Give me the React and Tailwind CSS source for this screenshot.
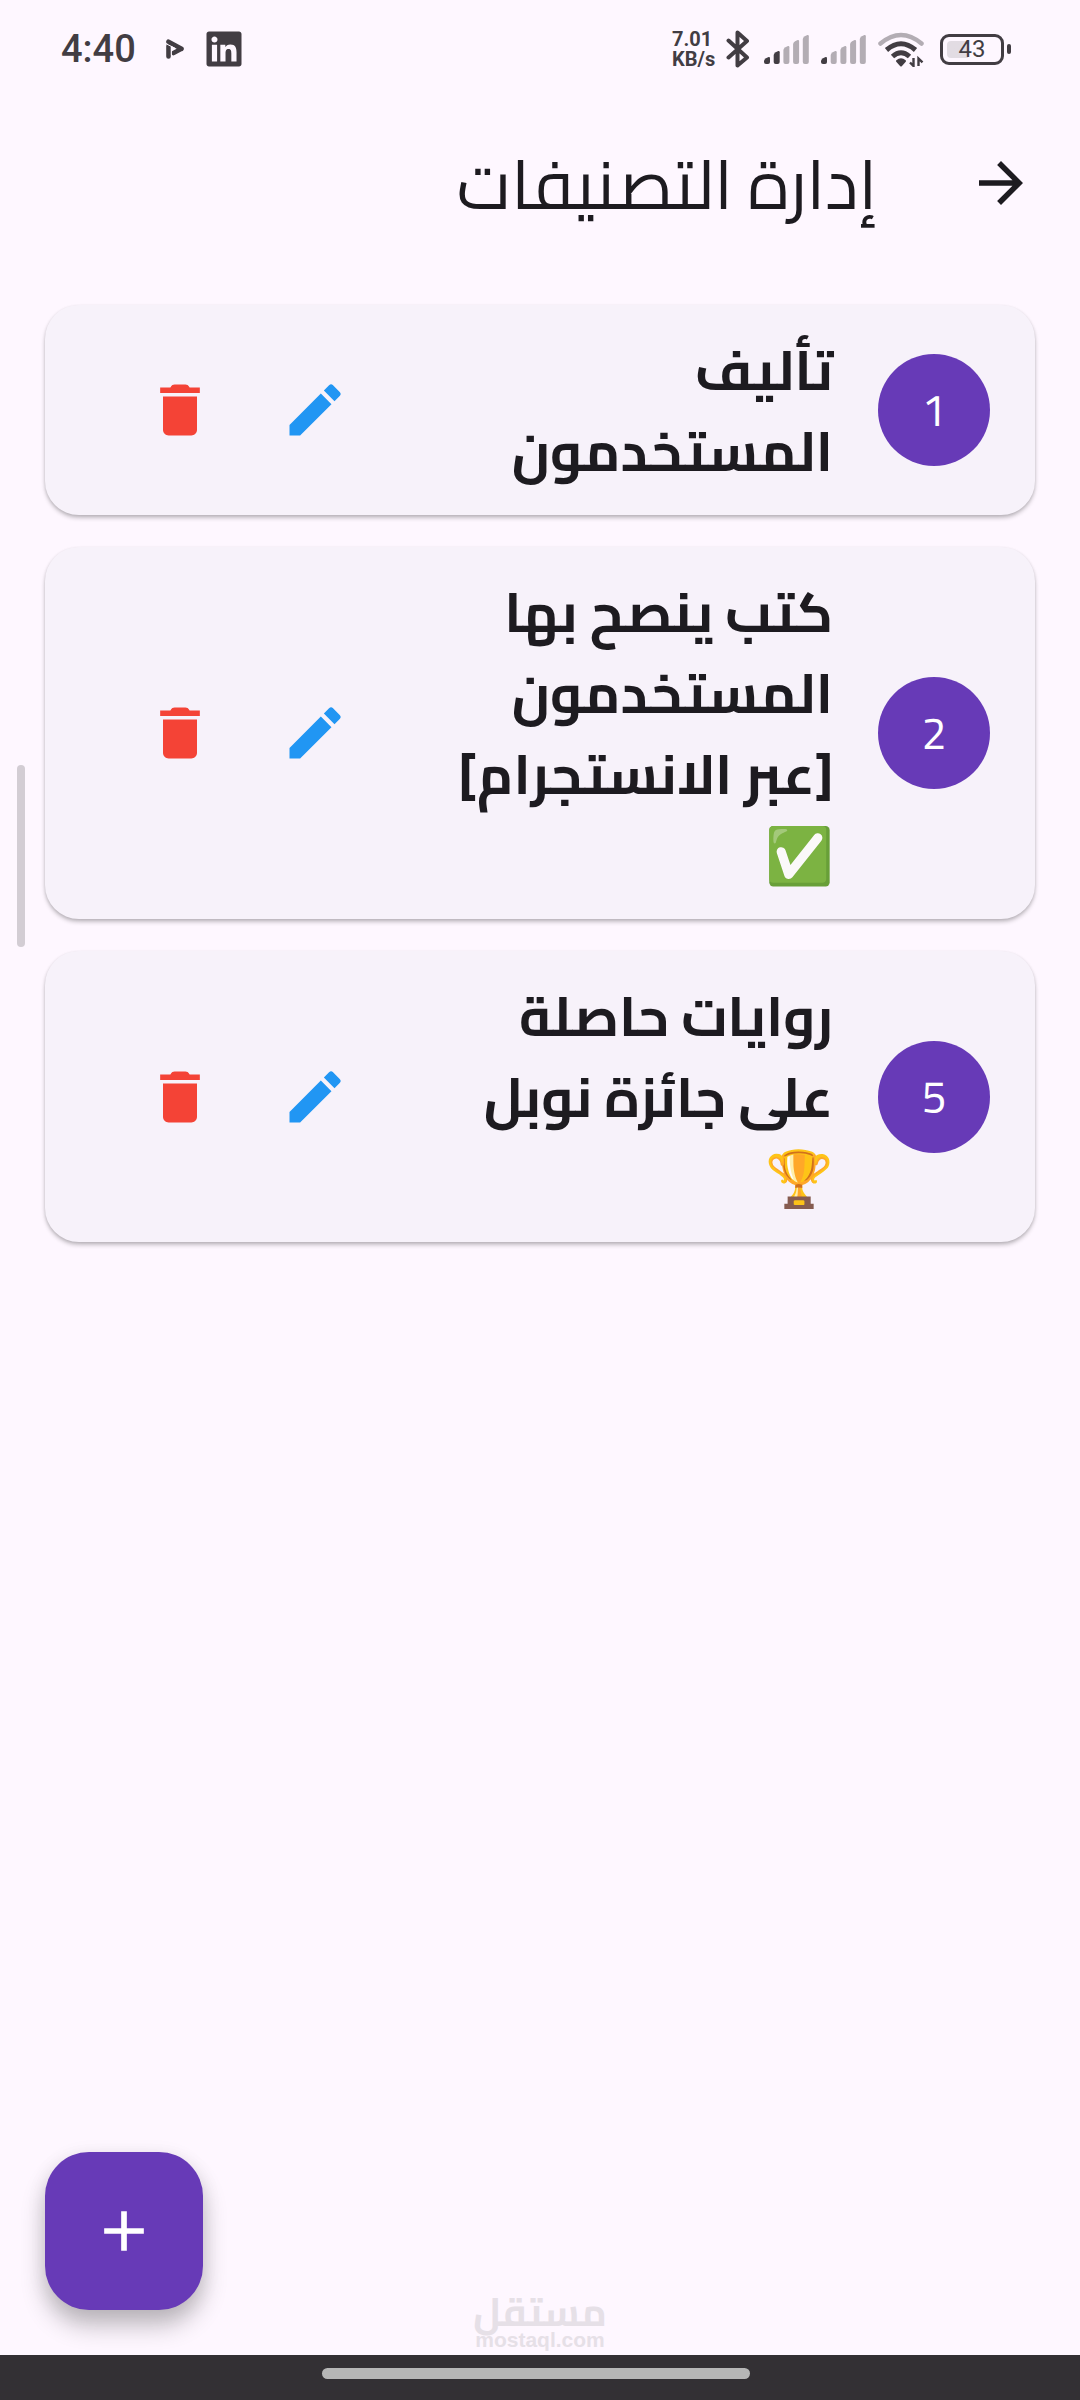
import React, { useState } from "react";
import { FaLinkedin } from "react-icons/fa";
import { MdAdd, MdArrowForward, MdEdit } from "react-icons/md";

const initialCategories = [
  { id: 1, lines: ["تأليف", "المستخدمون"] },
  { id: 2, lines: ["كتب ينصح بها", "المستخدمون", "[عبر الانستجرام]", "✅"] },
  { id: 5, lines: ["روايات حاصلة", "على جائزة نوبل", "🏆"] },
];

const TrashIcon = () => (
  <svg viewBox="0 0 24 24" className="size-[68px]" fill="currentColor" aria-hidden="true">
    <path d="M19 4.1h-3.6c-.5-.9-.9-1.1-1.500-1.100h-3.800c-.6 0-1 .2-1.500 1.100H5V6h14zM6 7.200V19c0 1.100.9 2 2 2h8c1.100 0 2-.9 2-2V7.200z" />
  </svg>
);

const PlayIcon = () => (
  <svg viewBox="0 0 18 20" className="h-5 w-[18px]" fill="none" aria-hidden="true">
    <path
      d="M2.500 2.700 15.500 9.800M2.500 7v10.500M7.500 14 15.500 9.800"
      stroke="currentColor"
      strokeWidth="4.600"
      strokeLinecap="round"
    />
    <path d="M1 5.200 9 9.300M5.400 8v8" stroke="#fef7ff" strokeWidth="1" />
  </svg>
);

const BluetoothIcon = () => (
  <svg viewBox="0 0 24 38" className="h-[38px] w-6" fill="none" aria-hidden="true">
    <path
      d="M2.500 10.500 21 27.500 11.500 35.500V2.500L21 11 2.500 27.500"
      stroke="currentColor"
      strokeWidth="4"
      strokeLinecap="round"
      strokeLinejoin="round"
    />
  </svg>
);

const SignalIcon = ({ level }) => (
  <svg viewBox="0 0 45 29" className="h-[29px] w-[45px]" aria-hidden="true">
    {[7, 13, 18, 24, 29].map((height, i) => {
      const x = i * 9.7;
      const top = 29 - height;
      return (
        <path
          key={height}
          d={`M${x} ${top + 4}q.2-1.800 2-2.700l2.600-1.200q1.400-.3 1.400 1.200V27q0 2-2 2h-2q-2 0-2-2z`}
          fill={i < level ? "#423d43" : "#b3adb4"}
        />
      );
    })}
  </svg>
);

const WifiIcon = () => (
  <svg viewBox="0 0 46 35" className="h-[35px] w-[46px]" fill="none" aria-hidden="true">
    <path d="M2.500 11.500Q23-5.500 43.500 11.500" stroke="#b3adb4" strokeWidth="4.500" strokeLinecap="round" />
    <path d="M8.500 18Q23 5.500 37.500 18M14.500 24.500Q23 17 31.500 24.500" stroke="currentColor" strokeWidth="5" />
    <path d="M19 29q4-3.500 8 0l-4 4.500z" fill="currentColor" stroke="currentColor" strokeWidth="2" strokeLinejoin="round" />
    <path d="M35.500 26v8l-3.500-3.500M40.500 34v-7.500l4 3.800" stroke="currentColor" strokeWidth="2.400" />
  </svg>
);

const StatusBar = () => (
  <div
    dir="ltr"
    className="flex h-24 items-center justify-between pt-0.5 pr-[69px] pl-[61px] font-[Roboto,sans-serif] text-[#423d43]"
  >
    <div className="flex items-center">
      <span className="text-[38px] leading-none font-medium">4:40</span>
      <span className="ml-[30px]">
        <PlayIcon />
      </span>
      <FaLinkedin className="ml-5 size-[40px]" />
    </div>
    <div className="flex items-center">
      <span className="w-[54px] text-[20px] leading-5 font-bold">
        7.01
        <br />
        KB/s
      </span>
      <BluetoothIcon />
      <span className="ml-[14px] flex gap-3">
        <SignalIcon level={2} />
        <SignalIcon level={1} />
      </span>
      <span className="ml-3">
        <WifiIcon />
      </span>
      <span className="ml-4 flex h-[31px] w-16 items-center rounded-[9px] border-3 border-current p-1">
        <span className="flex h-full w-full items-center justify-center rounded-sm bg-linear-to-r from-[#e2dce3] from-43% to-transparent to-43% text-2xl leading-none">
          43
        </span>
      </span>
      <span className="ml-[3px] h-[10px] w-1 rounded-sm bg-current" />
    </div>
  </div>
);

const CategoryCard = ({ category, onDelete }) => (
  <li className="flex items-center rounded-[34px] bg-[#f7f2fa] py-6 pr-[45px] pl-[67px] shadow-[0_3px_4px_rgba(0,0,0,0.22),0_1px_3px_rgba(0,0,0,0.1)]">
    <span className="flex size-28 shrink-0 items-center justify-center rounded-full bg-[#673ab7] text-[44px] leading-none text-white">
      {category.id}
    </span>
    <h2 className="mr-[45px] flex-1 text-[55px] leading-[81px] font-bold">
      {category.lines.map((line) => (
        <span key={line} className="block whitespace-nowrap">
          {line}
        </span>
      ))}
    </h2>
    <div className="flex shrink-0">
      <button type="button" aria-label="تعديل" className="flex size-[135px] items-center justify-center text-[#2196f3]">
        <MdEdit className="size-[68px]" />
      </button>
      <button
        type="button"
        aria-label="حذف"
        onClick={() => onDelete(category.id)}
        className="flex size-[135px] items-center justify-center text-[#f44336]"
      >
        <TrashIcon />
      </button>
    </div>
  </li>
);

const App = () => {
  const [categories, setCategories] = useState(initialCategories);

  const handleDelete = (id) => {
    setCategories((prev) => prev.filter((category) => category.id !== id));
  };

  return (
    <div
      dir="rtl"
      className="relative flex min-h-screen flex-col bg-[#fef7ff] font-[Cairo,'Noto_Kufi_Arabic','Noto_Sans_Arabic','DejaVu_Sans',sans-serif] text-[#1d1b20]"
    >
      <StatusBar />
      <header className="flex h-44 items-center pr-[46px] pb-0.5">
        <button type="button" aria-label="رجوع" className="flex size-[66px] items-center justify-center">
          <MdArrowForward className="size-[68px]" />
        </button>
        <h1 className="mr-[91px] text-[69px] leading-none">إدارة التصنيفات</h1>
      </header>
      <main className="flex-1 px-[45px] pt-[33px]">
        <ul className="flex flex-col gap-8">
          {categories.map((category) => (
            <CategoryCard key={category.id} category={category} onDelete={handleDelete} />
          ))}
        </ul>
      </main>
      <div className="absolute top-[765px] left-[17px] h-[182px] w-2 rounded-full bg-[#d3cdd4]" />
      <button
        type="button"
        aria-label="إضافة"
        className="absolute bottom-[90px] left-[45px] flex size-[158px] items-center justify-center rounded-[44px] bg-[#673ab7] text-white shadow-[0_16px_24px_rgba(0,0,0,0.24),0_4px_20px_rgba(0,0,0,0.08)]"
      >
        <MdAdd className="size-[68px]" />
      </button>
      <footer>
        <div className="flex flex-col items-center text-[#e6e0e7]">
          <span className="text-[39px] leading-8 font-bold">مستقل</span>
          <span className="pb-[3px] font-['Liberation_Sans',sans-serif] text-[21px] leading-6 font-bold">mostaql.com</span>
        </div>
        <div className="flex h-[45px] justify-center bg-[#333034] pt-[13px] pr-2">
          <div className="h-[11px] w-[428px] rounded-full bg-[#b6b6b6]" />
        </div>
      </footer>
    </div>
  );
};

export default App;
